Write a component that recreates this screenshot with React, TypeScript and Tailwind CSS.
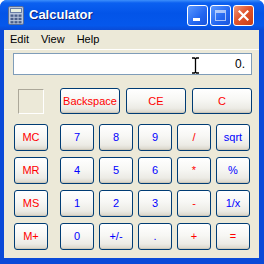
import React from "react";

type Key = { label: string; color: "red" | "blue" };

const rows: Key[][] = [
  [
    { label: "7", color: "blue" },
    { label: "8", color: "blue" },
    { label: "9", color: "blue" },
    { label: "/", color: "red" },
    { label: "sqrt", color: "blue" },
  ],
  [
    { label: "4", color: "blue" },
    { label: "5", color: "blue" },
    { label: "6", color: "blue" },
    { label: "*", color: "red" },
    { label: "%", color: "blue" },
  ],
  [
    { label: "1", color: "blue" },
    { label: "2", color: "blue" },
    { label: "3", color: "blue" },
    { label: "-", color: "red" },
    { label: "1/x", color: "blue" },
  ],
  [
    { label: "0", color: "blue" },
    { label: "+/-", color: "blue" },
    { label: ".", color: "blue" },
    { label: "+", color: "red" },
    { label: "=", color: "red" },
  ],
];

const memKeys = ["MC", "MR", "MS", "M+"];

const XpButton = ({
  label,
  color,
  className,
}: {
  label: string;
  color: "red" | "blue";
  className: string;
}) => (
  <button
    className={`${className} flex items-center justify-center rounded-[3px] border border-[#003c74] bg-[linear-gradient(to_bottom,#ffffff_0%,#f7f7f4_45%,#ecebe5_80%,#d8d4c8_100%)] shadow-[inset_0_-1px_0_#cdc8ba] text-[11px] leading-none ${
      color === "red" ? "text-[#ff0000]" : "text-[#0000ff]"
    }`}
  >
    {label}
  </button>
);

const CalcIcon = () => (
  <svg width="16" height="19" viewBox="0 0 16 19">
    <rect x="0.5" y="0.5" width="15" height="18" rx="1.5" fill="#b8c6dc" stroke="#5b6f96" />
    <rect x="2.5" y="2.5" width="11" height="4" fill="#e8f0e0" stroke="#6a7fa6" />
    {[0, 1, 2].map((r) =>
      [0, 1, 2].map((c) => (
        <rect key={`${r}${c}`} x={2.5 + c * 4} y={8.5 + r * 3.3} width="3" height="2.3" fill="#4a5f8a" />
      ))
    )}
  </svg>
);

export default function App() {
  return (
    <div className="w-[264px] h-[264px] bg-white font-['Liberation_Sans',Arial,sans-serif]">
      <div className="h-full flex flex-col rounded-t-[7px] overflow-hidden bg-[#0a4ad8]">
        {/* title bar */}
        <div className="h-[30px] shrink-0 flex items-center pl-[8px] pr-[10px] bg-[linear-gradient(to_bottom,#3d8ffb_0%,#0b60f0_10%,#0354e8_45%,#0558ec_85%,#0a4bd6_100%)]">
          <CalcIcon />
          <span className="ml-[5px] text-white font-bold text-[13px] [text-shadow:1px_1px_0_#0a1e7a]">
            Calculator
          </span>
          <div className="ml-auto flex gap-[2px]">
            <div className="w-[21px] h-[21px] rounded-[3px] border border-white bg-[linear-gradient(135deg,#5a98ff,#2366f0_60%,#1a55dc)] flex items-end pl-[5px] pb-[4px]">
              <div className="w-[7px] h-[3px] bg-white" />
            </div>
            <div className="w-[21px] h-[21px] rounded-[3px] border border-white bg-[linear-gradient(135deg,#5a98ff,#2366f0_60%,#1a55dc)] flex items-center justify-center">
              <div className="w-[11px] h-[11px] border border-white border-t-[3px] opacity-60" />
            </div>
            <div className="w-[21px] h-[21px] rounded-[3px] border border-white bg-[linear-gradient(135deg,#f09a7c,#e2552e_45%,#c83d14)] flex items-center justify-center">
              <svg width="11" height="11" viewBox="0 0 11 11">
                <path d="M1.5 1.5 L9.5 9.5 M9.5 1.5 L1.5 9.5" stroke="white" strokeWidth="2.2" strokeLinecap="square" />
              </svg>
            </div>
          </div>
        </div>

        {/* client area */}
        <div className="flex-1 ml-[4px] mr-[5px] mb-[6px] bg-[#ece9d8] flex flex-col">
          <div className="h-[19px] flex items-center gap-[12px] pl-[6px] text-[11px] text-black">
            <span>Edit</span>
            <span>View</span>
            <span>Help</span>
          </div>
          <div className="h-px bg-white" />

          {/* display */}
          <div className="relative mt-[3px] ml-[9px] w-[239px] h-[22px] bg-white border border-[#7f9db9] flex items-center justify-end pr-[6px] text-[12px] text-black">
            0.
            <svg className="absolute left-[177px] top-[3px]" width="9" height="17" viewBox="0 0 9 17">
              <path d="M1 1 H3.5 L4.5 2 L5.5 1 H8 M4.5 2 V15 M1 16 H3.5 L4.5 15 L5.5 16 H8" stroke="black" strokeWidth="1.3" fill="none" />
            </svg>
          </div>

          {/* top row */}
          <div className="mt-[13px] flex">
            <div className="ml-[10px] w-[34px] flex justify-center">
              <div className="mt-[1px] w-[26px] h-[25px] border border-t-[#aca899] border-l-[#aca899] border-b-white border-r-white" />
            </div>
            <div className="ml-[12px] flex gap-[6px]">
              <XpButton label="Backspace" color="red" className="w-[60px] h-[26px]" />
              <XpButton label="CE" color="red" className="w-[60px] h-[26px]" />
              <XpButton label="C" color="red" className="w-[60px] h-[26px]" />
            </div>
          </div>

          {/* keypad */}
          <div className="mt-[10px] flex flex-col gap-[6px]">
            {rows.map((row, i) => (
              <div key={i} className="flex">
                <XpButton label={memKeys[i]} color="red" className="ml-[10px] w-[34px] h-[27px]" />
                <div className="ml-[12px] flex gap-[5px]">
                  {row.map((k) => (
                    <XpButton key={k.label} label={k.label} color={k.color} className="w-[34px] h-[27px]" />
                  ))}
                </div>
              </div>
            ))}
          </div>
        </div>
      </div>
    </div>
  );
}
